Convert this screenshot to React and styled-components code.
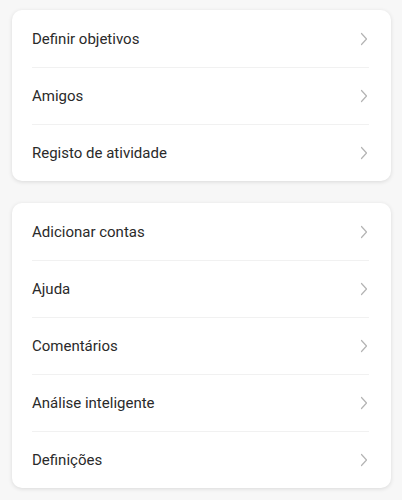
import React from 'react';
import styled, { createGlobalStyle } from 'styled-components';

const GlobalStyle = createGlobalStyle`
  body {
    margin: 0;
    background: #f7f7f7;
    font-family: Roboto, "Noto Sans", sans-serif;
  }
`;

const Page = styled.div`
  display: flex;
  flex-direction: column;
  gap: 22px;
  padding: 10px 11px 12px 12px;
`;

const Card = styled.div`
  background: #fff;
  border-radius: 10px;
  box-shadow: 0 1px 4px rgba(0, 0, 0, 0.12);
  overflow: hidden;
`;

const Row = styled.div`
  display: flex;
  align-items: center;
  justify-content: space-between;
  height: 57px;
  margin: 0 22px 0 20px;
  box-sizing: border-box;
  border-top: ${p => (p.first ? 'none' : '1px solid #f1f1f1')};
  padding: 0 1px 0 0;
`;

const Label = styled.span`
  font-size: 15px;
  color: #2a2a2a;
`;

const Chevron = () => (
  <svg width="8" height="14" viewBox="0 0 8 14">
    <path d="M1.5 1.5 L6.5 7 L1.5 12.5" fill="none" stroke="#b4b4b4" strokeWidth="1.2" strokeLinecap="round" strokeLinejoin="round" />
  </svg>
);

const groups = [
  ['Definir objetivos', 'Amigos', 'Registo de atividade'],
  ['Adicionar contas', 'Ajuda', 'Comentários', 'Análise inteligente', 'Definições'],
];

export default function App() {
  return (
    <>
      <GlobalStyle />
      <Page>
        {groups.map((items, gi) => (
          <Card key={gi}>
            {items.map((item, i) => (
              <Row key={item} first={i === 0}>
                <Label>{item}</Label>
                <Chevron />
              </Row>
            ))}
          </Card>
        ))}
      </Page>
    </>
  );
}
